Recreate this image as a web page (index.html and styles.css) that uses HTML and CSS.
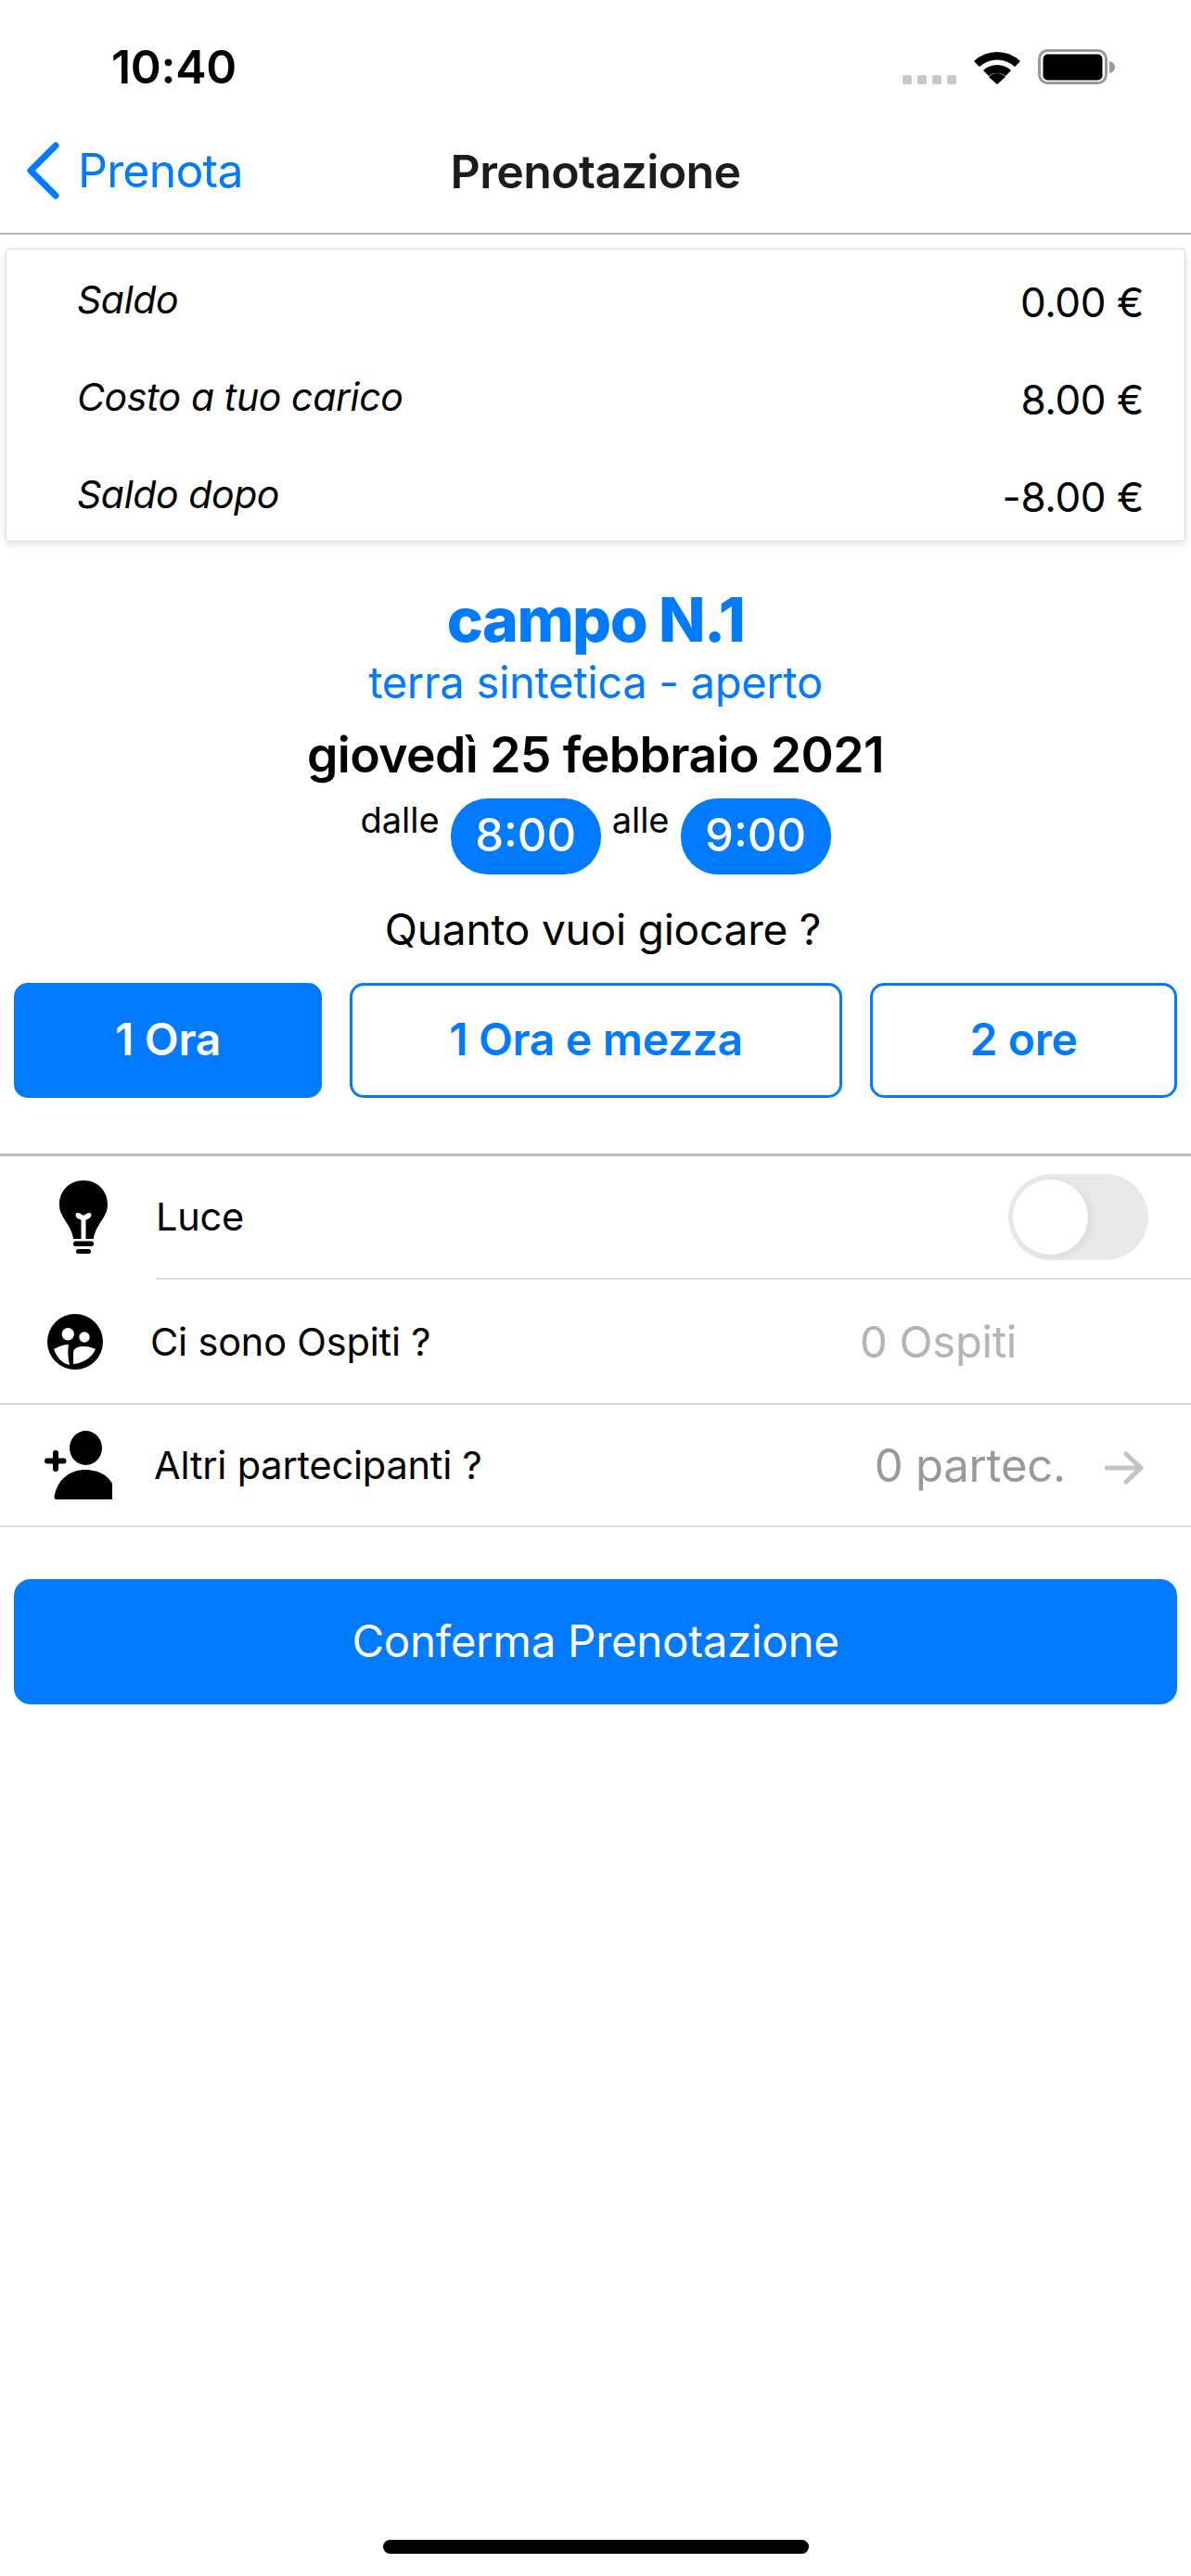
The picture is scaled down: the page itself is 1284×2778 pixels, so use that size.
FILE: index.html
```html
<!DOCTYPE html>
<html lang="it">
<head>
    <meta charset="UTF-8">
    <meta name="viewport" content="width=device-width, initial-scale=1.0">
    <title>Prenotazione</title>
    <link rel="stylesheet" href="styles.css">
</head>
<body>
    <div class="status-bar">
        <span class="time">10:40</span>
        <div class="status-icons">
            <div class="signal"><i></i><i></i><i></i><i></i></div>
            <svg class="wifi" width="50" height="37" viewBox="0 0 50 37">
                <path d="M0 12 A36 36 0 0 1 50 12 L44 18 A28 28 0 0 0 6 18 Z"/>
                <path d="M10 22 A22 22 0 0 1 40 22 L34 28 A14 14 0 0 0 16 28 Z"/>
                <path d="M25 37 L16 29 A12 12 0 0 1 34 29 Z"/>
            </svg>
            <svg class="battery" width="83" height="39" viewBox="0 0 83 39">
                <rect x="1.5" y="1.5" width="72" height="35" rx="9" fill="none" stroke="#999" stroke-width="3"/>
                <rect x="5.5" y="5.5" width="64" height="28" rx="5"/>
                <path d="M77 13 C81 14 83 17 83 19.500 C83 22 81 25 77 26 Z" fill="#999"/>
            </svg>
        </div>
    </div>

    <div class="nav">
        <div class="back">
            <svg width="36" height="62" viewBox="0 0 36 62">
                <path d="M32 4 L5 31 L32 58" fill="none" stroke="#007aff" stroke-width="7" stroke-linecap="round" stroke-linejoin="round"/>
            </svg>
            <span>Prenota</span>
        </div>
        <div class="nav-title">Prenotazione</div>
    </div>

    <div class="card">
        <div class="card-row"><em>Saldo</em><span>0.00 €</span></div>
        <div class="card-row"><em>Costo a tuo carico</em><span>8.00 €</span></div>
        <div class="card-row"><em>Saldo dopo</em><span>-8.00 €</span></div>
    </div>

    <div class="summary">
        <h1>campo N.1</h1>
        <div class="surface">terra sintetica - aperto</div>
        <div class="date">giovedì 25 febbraio 2021</div>
        <div class="hours">
            <span class="hours-label">dalle</span>
            <span class="pill">8:00</span>
            <span class="hours-label">alle</span>
            <span class="pill">9:00</span>
        </div>
        <div class="question">Quanto vuoi giocare ?</div>
    </div>

    <div class="durations">
        <button class="duration active d-short">1 Ora</button>
        <button class="duration d-long">1 Ora e mezza</button>
        <button class="duration d-short">2 ore</button>
    </div>

    <div class="options">
        <div class="option option-light">
            <svg class="option-icon bulb" width="60" height="80" viewBox="0 0 60 80">
                <path fill-rule="evenodd" d="M30 0 C45 0 56 11 56 26 C56 40 44 46 41 62 L41 63 L19 63 L19 62 C16 46 4 40 4 26 C4 11 15 0 30 0 Z M21.500 37 C21.500 40 25 42 27.500 42.500 L27.500 63 L32.500 63 L32.500 42.500 C35 42 38.500 40 38.500 37 C38.500 34.500 35 34.500 33 36 C31.500 37 31 37.500 30 37.500 C29 37.500 28.500 37 27 36 C25 34.500 21.500 34.500 21.500 37 Z"/>
                <rect x="19" y="65.500" width="22" height="5.500" rx="2.500"/>
                <rect x="22" y="74" width="16" height="5" rx="2.500"/>
            </svg>
            <span class="option-label">Luce</span>
            <div class="toggle"><div class="knob"></div></div>
        </div>
        <div class="option option-guests">
            <svg class="option-icon" width="60" height="60" viewBox="0 0 60 60">
                <circle cx="30" cy="30" r="30"/>
                <circle cx="22.300" cy="21.700" r="6.700" fill="#fff"/>
                <circle cx="40" cy="25" r="5.700" fill="#fff"/>
                <path d="M7 38 C12 35 17 33 23 33 C22 38 22 45 24 55 C15 53 10 46 7 38 Z" fill="#fff"/>
                <path d="M28 54 L28 42 C28 37 33 35 38 35 C44 34.500 49 36 52 38 C48 47 39 53 28 54 Z" fill="#fff"/>
            </svg>
            <span class="option-label">Ci sono Ospiti ?</span>
            <span class="option-value light">0 Ospiti</span>
        </div>
        <div class="option option-players">
            <svg class="option-icon" width="73" height="74" viewBox="0 0 73 74">
                <ellipse cx="44.500" cy="18.500" rx="17.500" ry="18.500"/>
                <path d="M13 74 C11 74 10 72 11 69 C15 50 30 42 44 42 C56 42 68 47 73 57 L73 74 Z"/>
                <rect x="0" y="29.500" width="23.500" height="6" rx="3"/>
                <rect x="9" y="21" width="6" height="23" rx="3"/>
            </svg>
            <span class="option-label">Altri partecipanti ?</span>
            <span class="option-value">0 partec.</span>
            <svg class="arrow" width="42" height="36" viewBox="0 0 42 36">
                <path d="M2 18 L39 18 M23 3 L39 18 L23 33" fill="none" stroke="#c4c4c6" stroke-width="5" stroke-linecap="round" stroke-linejoin="round"/>
            </svg>
        </div>
    </div>

    <button class="confirm">Conferma Prenotazione</button>

    <div class="home-indicator"></div>
</body>
</html>
```

FILE: styles.css
```css
* {
    margin: 0;
    padding: 0;
    box-sizing: border-box;
}

body {
    font-family: Inter, "Liberation Sans", sans-serif;
    background-color: white;
    color: black;
    width: 1284px;
    height: 2778px;
    display: flex;
    flex-direction: column;
    overflow: hidden;
}

/* status bar */
.status-bar {
    height: 132px;
    flex: none;
    display: flex;
    justify-content: space-between;
    padding: 43px 82px 0 120px;
}

.time {
    font-size: 50px;
    font-weight: 600;
    line-height: 58px;
    letter-spacing: -0.3px;
}

.status-icons {
    display: flex;
    align-items: flex-start;
    padding-top: 10px;
}

.signal {
    display: flex;
    gap: 6px;
    margin-top: 28px;
    margin-right: 19px;
}

.signal i {
    width: 10px;
    height: 10px;
    border-radius: 2px;
    background-color: #c8c8c8;
}

.wifi {
    margin-top: 1px;
    margin-right: 19px;
}

/* nav */
.nav {
    height: 121px;
    flex: none;
    display: flex;
    align-items: center;
    justify-content: center;
    border-bottom: 2px solid #b4b4b4;
    position: relative;
    padding-bottom: 14px;
}

.back {
    position: absolute;
    left: 28px;
    top: 21px;
    display: flex;
    align-items: center;
    gap: 20px;
    color: #007aff;
    font-size: 50px;
}

.back span {
    letter-spacing: -0.8px;
}

.nav-title {
    font-size: 50px;
    font-weight: 600;
    color: #1c1c1e;
    letter-spacing: -0.6px;
}

/* balance card */
.card {
    flex: none;
    height: 316px;
    margin: 15px 6px 0;
    padding: 4px 44px 0 76px;
    border: 1px solid #dcdcdc;
    border-radius: 4px;
    box-shadow: 0 3px 8px rgba(0, 0, 0, 0.12);
}

.card-row {
    height: 105px;
    display: flex;
    align-items: center;
    justify-content: space-between;
    letter-spacing: -0.4px;
}

.card-row em {
    font-size: 41px;
    margin-top: -6px;
}

.card-row span {
    font-size: 44px;
}

/* court summary */
.summary {
    flex: none;
    text-align: center;
    padding-top: 48px;
}

.summary h1 {
    font-size: 66px;
    font-weight: 800;
    line-height: 72px;
    color: #007aff;
    letter-spacing: -1.5px;
}

.surface {
    font-size: 47px;
    line-height: 60px;
    color: #007aff;
    margin-top: 2px;
    letter-spacing: -0.3px;
}

.date {
    font-size: 53.500px;
    font-weight: 600;
    line-height: 62px;
    margin-top: 17px;
    letter-spacing: -0.6px;
}

.hours {
    display: flex;
    justify-content: center;
    gap: 12px;
    margin-top: 16px;
}

.hours-label {
    font-size: 38px;
    line-height: 46px;
}

.pill {
    width: 162px;
    height: 82px;
    border-radius: 40px;
    background-color: #007aff;
    color: white;
    font-size: 49px;
    font-weight: 500;
    line-height: 80px;
}

.question {
    font-size: 46px;
    line-height: 60px;
    margin-top: 29px;
    padding-left: 16px;
    letter-spacing: -0.2px;
}

/* duration buttons */
.durations {
    flex: none;
    display: flex;
    gap: 30px;
    padding: 28px 15px 0;
}

.duration {
    width: 331px;
    height: 124px;
    padding-bottom: 3px;
    border: 3px solid #007aff;
    border-radius: 15px;
    background-color: white;
    color: #007aff;
    font-family: inherit;
    font-size: 48px;
    font-weight: 600;
    letter-spacing: -0.3px;
}

.d-short:first-child {
    width: 332px;
}

.d-long {
    width: 531px;
}

.duration.active {
    background-color: #007aff;
    color: white;
}

/* option rows */
.options {
    flex: none;
    margin-top: 60px;
    border-top: 3px solid #bcbcbc;
}

.option {
    display: flex;
    align-items: center;
    font-size: 41.500px;
    letter-spacing: -0.2px;
}

.option-label {
    flex: none;
}

.option-value {
    margin-left: auto;
    font-size: 49px;
    color: #999;
}

.option-value.light {
    font-size: 47px;
    color: #b4b4b4;
    margin-right: 188px;
}

.option-light {
    height: 133px;
    padding-left: 60px;
    position: relative;
}

/* inset separator, starts under the label */
.option-light::after {
    content: "";
    position: absolute;
    left: 168px;
    right: 0;
    bottom: 0;
    height: 2px;
    background-color: #dedede;
}

.bulb {
    margin-top: -2px;
}

.option-light .option-label {
    margin-left: 48px;
    margin-bottom: 3px;
}

.toggle {
    width: 151px;
    height: 93px;
    margin-left: auto;
    margin-right: 46px;
    margin-bottom: 2px;
    border-radius: 47px;
    background-color: #e9e9ea;
    padding: 6px 5px;
}

.knob {
    width: 81px;
    height: 81px;
    border-radius: 50%;
    background-color: white;
    box-shadow: 4px 2px 10px rgba(0, 0, 0, 0.07);
}

.option-guests {
    height: 135px;
    padding-left: 51px;
    border-bottom: 2px solid #d8d8d8;
}

.option-guests .option-label {
    margin-left: 51px;
}

.option-players {
    height: 132px;
    padding-left: 48px;
    padding-right: 51px;
    border-bottom: 2px solid #dedede;
}

.option-players .option-label {
    margin-left: 45px;
}

.arrow {
    margin-left: 42px;
    margin-top: 6px;
}

/* confirm */
.confirm {
    flex: none;
    height: 135px;
    margin: 56px 15px 0;
    padding-bottom: 3px;
    border: none;
    border-radius: 18px;
    background-color: #007aff;
    color: white;
    font-family: inherit;
    font-size: 47.500px;
    letter-spacing: -0.3px;
}

.home-indicator {
    width: 459px;
    height: 15px;
    margin: auto auto 24px;
    border-radius: 8px;
    background-color: black;
}
```
